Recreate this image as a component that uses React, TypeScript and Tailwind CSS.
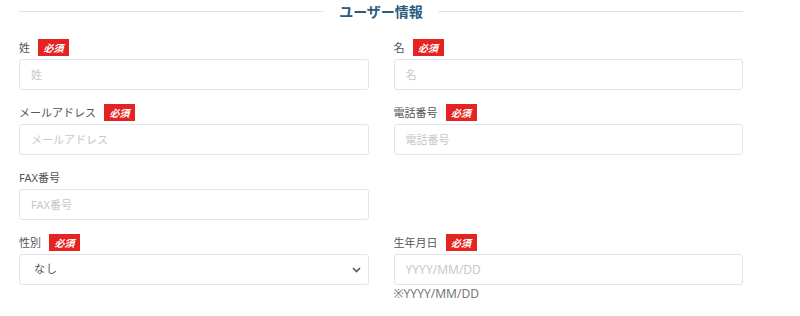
import React from "react";

const font = { fontFamily: '"Noto Sans", "Noto Sans CJK JP", sans-serif' };

function Badge() {
  return (
    <span className="ml-2 inline-flex h-[17px] w-[31px] items-center justify-center bg-[#e52421] text-[10px] font-bold italic leading-none text-white">
      必須
    </span>
  );
}

function Field({
  label,
  required,
  placeholder,
  children,
}: {
  label: string;
  required?: boolean;
  placeholder?: string;
  children?: React.ReactNode;
}) {
  return (
    <div className="flex flex-col">
      <div className="flex h-[17px] items-center text-[11px] leading-none text-[#555]">
        <span>{label}</span>
        {required && <Badge />}
      </div>
      <div className="mt-[3px]">
        {children ?? (
          <input
            placeholder={placeholder}
            className="h-[31px] w-full rounded-[3px] border border-[#dde5ee] bg-white px-[11px] text-[11px] text-[#555] outline-none placeholder:text-[#c8c8c8]"
          />
        )}
      </div>
    </div>
  );
}

export default function App() {
  return (
    <div className="h-[316px] w-[800px] bg-white" style={font}>
      <div className="w-[743px] pl-[19px]">
        <div className="flex h-[23px] items-center">
          <div className="h-px flex-1 bg-[#dde3ea]" />
          <h2 className="mx-[15px] text-[14px] font-bold leading-none text-[#2b5b80]">
            ユーザー情報
          </h2>
          <div className="h-px flex-1 bg-[#dde3ea]" />
        </div>
        <div className="mt-[16px] grid grid-cols-2 gap-x-[25px] gap-y-[14px]">
          <Field label="姓" required placeholder="姓" />
          <Field label="名" required placeholder="名" />
          <Field label="メールアドレス" required placeholder="メールアドレス" />
          <Field label="電話番号" required placeholder="電話番号" />
          <Field label="FAX番号" placeholder="FAX番号" />
          <div />
          <Field label="性別" required>
            <div className="relative">
              <select
                className="h-[31px] w-full appearance-none rounded-[3px] border border-[#dde5ee] bg-white px-[14px] text-[11px] tracking-[1px] text-[#555] outline-none"
                defaultValue="なし"
              >
                <option>なし</option>
                <option>男性</option>
                <option>女性</option>
              </select>
              <svg
                className="pointer-events-none absolute right-[8px] top-1/2 -translate-y-1/2"
                width="9"
                height="6"
                viewBox="0 0 9 6"
              >
                <path d="M1 1l3.5 3.5L8 1" fill="none" stroke="#555" strokeWidth="1.6" />
              </svg>
            </div>
          </Field>
          <Field label="生年月日" required>
            <input
              placeholder="YYYY/MM/DD"
              className="h-[31px] w-full rounded-[3px] border border-[#dde5ee] bg-white px-[11px] text-[12px] text-[#555] outline-none placeholder:text-[#c8c8c8]"
            />
            <div className="mt-[3px] text-[12px] leading-none text-[#777]">※YYYY/MM/DD</div>
          </Field>
        </div>
      </div>
    </div>
  );
}
